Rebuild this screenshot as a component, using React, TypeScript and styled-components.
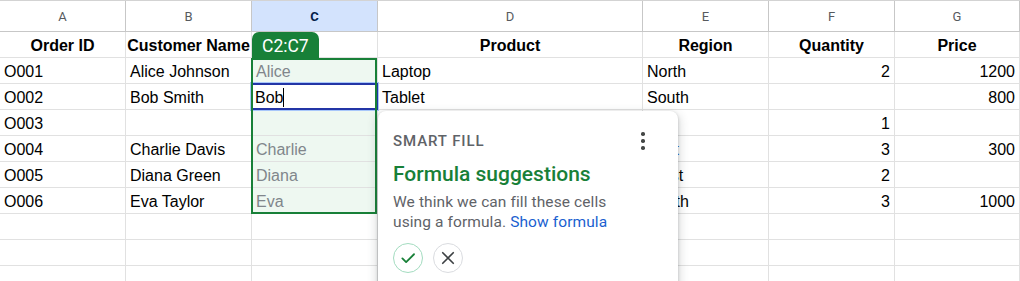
import React from 'react'
import styled, { createGlobalStyle } from 'styled-components'

const GlobalStyle = createGlobalStyle`
  html, body {
    margin: 0;
    padding: 0;
    background: #fff;
    overflow: hidden;
  }
  body {
    font-family: 'Liberation Sans', Arial, sans-serif;
  }
`

const columns = ['A', 'B', 'C', 'D', 'E', 'F', 'G']
const widths = [126, 126, 126, 265, 126, 126, 125]

type Align = 'left' | 'center' | 'right'

interface CellData {
  text?: string
  align?: Align
  bold?: boolean
  hint?: boolean
  color?: string
}

const header: CellData[] = [
  { text: 'Order ID', align: 'center', bold: true },
  { text: 'Customer Name', align: 'center', bold: true },
  {},
  { text: 'Product', align: 'center', bold: true },
  { text: 'Region', align: 'center', bold: true },
  { text: 'Quantity', align: 'center', bold: true },
  { text: 'Price', align: 'center', bold: true },
]

// rows under the popup keep only what peeks out beside it
const rows: CellData[][] = [
  [{ text: 'O001' }, { text: 'Alice Johnson' }, { text: 'Alice', hint: true }, { text: 'Laptop' }, { text: 'North' }, { text: '2', align: 'right' }, { text: '1200', align: 'right' }],
  [{ text: 'O002' }, { text: 'Bob Smith' }, {}, { text: 'Tablet' }, { text: 'South' }, {}, { text: '800', align: 'right' }],
  [{ text: 'O003' }, {}, {}, {}, {}, { text: '1', align: 'right' }, {}],
  [{ text: 'O004' }, { text: 'Charlie Davis' }, { text: 'Charlie', hint: true }, {}, { text: 'East', color: '#1a57c8' }, { text: '3', align: 'right' }, { text: '300', align: 'right' }],
  [{ text: 'O005' }, { text: 'Diana Green' }, { text: 'Diana', hint: true }, {}, { text: 'West' }, { text: '2', align: 'right' }, {}],
  [{ text: 'O006' }, { text: 'Eva Taylor' }, { text: 'Eva', hint: true }, {}, { text: 'South' }, { text: '3', align: 'right' }, { text: '1000', align: 'right' }],
  [{}, {}, {}, {}, {}, {}, {}],
  [{}, {}, {}, {}, {}, {}, {}],
  [{}, {}, {}, {}, {}, {}, {}],
]

export default function App() {
  return (
    <>
      <GlobalStyle />
      <Sheet>
        <Grid>
          {columns.map((c) => (
            <ColumnHead key={c} $selected={c === 'C'}>
              {c}
            </ColumnHead>
          ))}
          {header.map((cell, i) => (
            <Cell key={'h' + i} $align={cell.align} $bold={cell.bold} $overflow>
              {cell.text}
            </Cell>
          ))}
          {rows.map((row, r) =>
            row.map((cell, i) => {
              const inRange = i === 2 && r < 6
              if (inRange && r === 1) {
                return (
                  <ActiveCell key={r + '-' + i}>
                    Bob<Caret />
                  </ActiveCell>
                )
              }
              return (
                <Cell
                  key={r + '-' + i}
                  $align={cell.align}
                  $hint={cell.hint}
                  $fill={inRange}
                  $color={cell.color}
                >
                  {cell.text}
                </Cell>
              )
            })
          )}
        </Grid>

        <RangeTag>C2:C7</RangeTag>
        <RangeBox />

        <Popup>
          <PopupHead>
            <Eyebrow>SMART FILL</Eyebrow>
            <Kebab aria-label='More'>
              <span />
              <span />
              <span />
            </Kebab>
          </PopupHead>
          <Title>Formula suggestions</Title>
          <Body>
            We think we can fill these cells using a formula. <LinkText>Show formula</LinkText>
          </Body>
          <Actions>
            <RoundButton $accept aria-label='Accept'>
              <svg width='18' height='18' viewBox='0 0 24 24' fill='none'>
                <path d='M4.5 12.5l5 5L20 7' stroke='#188038' strokeWidth='2.4' strokeLinecap='round' strokeLinejoin='round' />
              </svg>
            </RoundButton>
            <RoundButton aria-label='Dismiss'>
              <svg width='18' height='18' viewBox='0 0 24 24' fill='none'>
                <path d='M5 5l14 14M19 5L5 19' stroke='#3c4043' strokeWidth='2.2' strokeLinecap='round' />
              </svg>
            </RoundButton>
          </Actions>
        </Popup>
      </Sheet>
    </>
  )
}

const Sheet = styled.div`
  position: relative;
  width: 1020px;
  height: 281px;
  overflow: hidden;
  border-top: 1px solid #d3d3d3;
  box-sizing: border-box;
`

const Grid = styled.div`
  display: grid;
  grid-template-columns: ${widths.map((w) => w + 'px').join(' ')};
  grid-template-rows: 31px repeat(10, 26px);
`

const ColumnHead = styled.div<{ $selected?: boolean }>`
  display: flex;
  align-items: center;
  justify-content: center;
  box-sizing: border-box;
  border-right: 1px solid #c7c7c7;
  border-bottom: 1px solid #c7c7c7;
  background: ${(p) => (p.$selected ? '#d3e3fd' : '#fff')};
  color: ${(p) => (p.$selected ? '#041e49' : '#575a5e')};
  font-family: 'Roboto', 'Liberation Sans', sans-serif;
  font-size: 13px;
  font-weight: ${(p) => (p.$selected ? 700 : 400)};
`

const Cell = styled.div<{
  $align?: Align
  $bold?: boolean
  $hint?: boolean
  $fill?: boolean
  $overflow?: boolean
  $color?: string
}>`
  display: flex;
  align-items: center;
  justify-content: ${(p) => (p.$align === 'center' ? 'center' : p.$align === 'right' ? 'flex-end' : 'flex-start')};
  box-sizing: border-box;
  padding: 2px 4px 0;
  border-right: 1px solid #e1e1e1;
  border-bottom: 1px solid #e1e1e1;
  background: ${(p) => (p.$fill ? '#eef8f1' : '#fff')};
  color: ${(p) => (p.$hint ? '#80868b' : p.$color || '#000')};
  font-size: 16px;
  font-weight: ${(p) => (p.$bold ? 700 : 400)};
  white-space: nowrap;
  overflow: ${(p) => (p.$overflow ? 'visible' : 'hidden')};
  position: relative;
  z-index: ${(p) => (p.$overflow ? 1 : 0)};
`

const ActiveCell = styled.div`
  display: flex;
  align-items: center;
  box-sizing: border-box;
  padding: 2px 4px 0;
  background: #fff;
  font-size: 16px;
  color: #000;
  position: relative;
  z-index: 2;
  margin: -1px 0 0 -1px;
  box-shadow: inset 0 0 0 2px #2335a6, 0 0 0 1px #a8c7fa;
`

const Caret = styled.span`
  display: inline-block;
  width: 1px;
  height: 19px;
  background: #000;
`

const RangeBox = styled.div`
  position: absolute;
  left: 251px;
  top: 57px;
  width: 126px;
  height: 156px;
  box-sizing: border-box;
  border: 2px solid #188038;
  z-index: 3;
  pointer-events: none;
`

const RangeTag = styled.div`
  position: absolute;
  left: 252px;
  top: 31px;
  height: 27px;
  padding: 1px 10px 0;
  box-sizing: border-box;
  display: flex;
  align-items: center;
  border-radius: 7px 7px 0 0;
  background: #188038;
  color: #fff;
  font-family: 'Roboto', 'Liberation Sans', sans-serif;
  font-size: 17.5px;
  z-index: 4;
`

const Popup = styled.div`
  position: absolute;
  left: 378px;
  top: 110px;
  width: 300px;
  height: 190px;
  box-sizing: border-box;
  padding: 18px 15px 0 15px;
  background: #fff;
  border-radius: 8px;
  box-shadow: 0 1px 3px rgba(60, 64, 67, 0.3), 0 4px 8px 3px rgba(60, 64, 67, 0.15);
  font-family: 'Roboto', 'Liberation Sans', sans-serif;
  z-index: 5;
`

const PopupHead = styled.div`
  display: flex;
  justify-content: space-between;
  align-items: center;
  height: 24px;
`

const Eyebrow = styled.div`
  font-size: 15px;
  font-weight: 500;
  letter-spacing: 0.9px;
  color: #5f6368;
`

const Kebab = styled.div`
  display: flex;
  flex-direction: column;
  align-items: center;
  gap: 3.5px;
  width: 20px;
  margin-right: 10px;

  span {
    width: 3.5px;
    height: 3.5px;
    border-radius: 50%;
    background: #444746;
  }
`

const Title = styled.div`
  margin-top: 8px;
  font-size: 21px;
  font-weight: 500;
  color: #188038;
  line-height: 26px;
`

const Body = styled.div`
  margin-top: 5px;
  width: 226px;
  font-size: 15.5px;
  letter-spacing: 0.1px;
  line-height: 20px;
  color: #5f6368;
`

const LinkText = styled.span`
  color: #1a5fd0;
`

const Actions = styled.div`
  display: flex;
  gap: 10px;
  margin-top: 11px;
`

const RoundButton = styled.div<{ $accept?: boolean }>`
  width: 30px;
  height: 30px;
  box-sizing: border-box;
  border-radius: 50%;
  border: 1px solid ${(p) => (p.$accept ? '#a3dcc0' : '#dadce0')};
  display: flex;
  align-items: center;
  justify-content: center;
  background: #fff;
`
